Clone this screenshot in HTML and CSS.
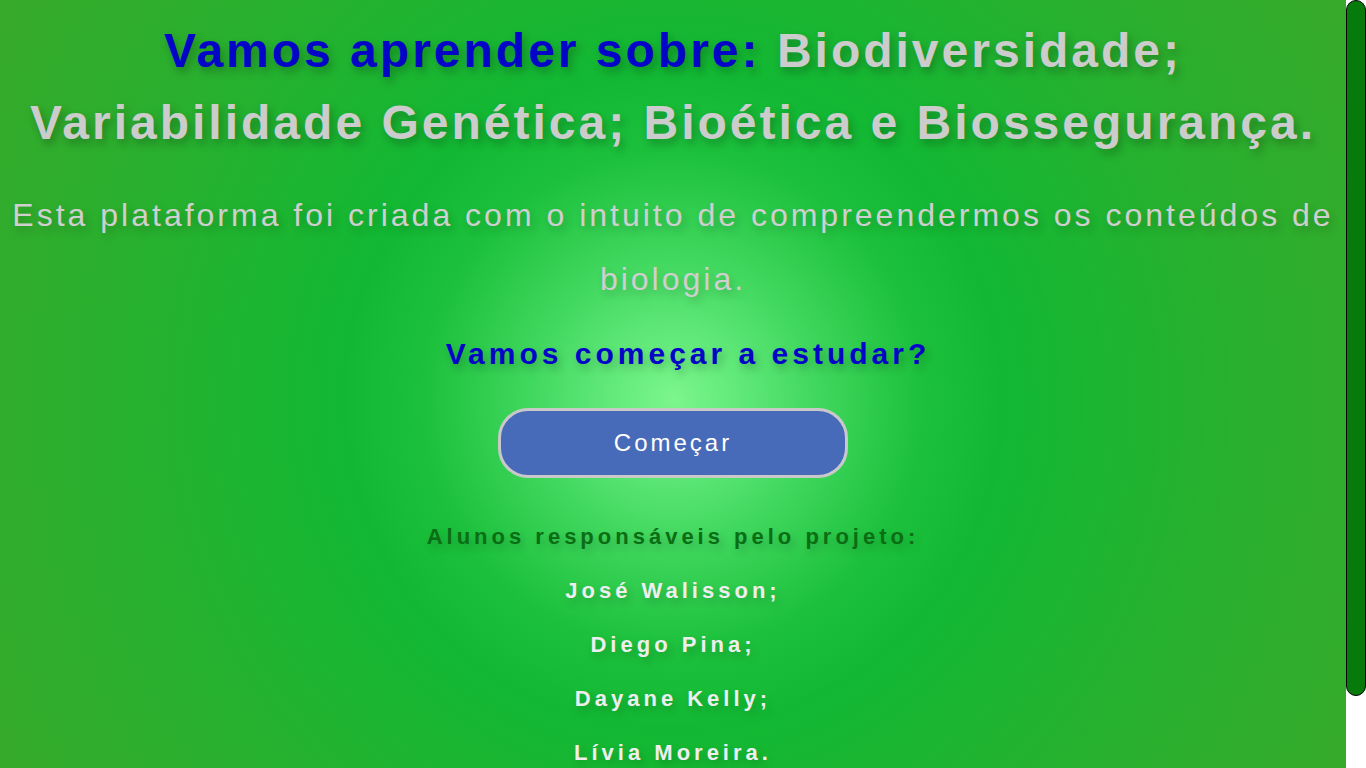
FILE: index.html
```html
<!DOCTYPE html>
<html lang="pt-BR">
<head>
<meta charset="utf-8">
<title>Biologia</title>
<link rel="stylesheet" href="styles.css">
</head>
<body>
<div class="app">
  <div class="screen">
    <main class="page">
      <h1 class="title"><span class="title-blue">Vamos aprender sobre:</span> Biodiversidade; Variabilidade Genética; Bioética e Biossegurança.</h1>
      <p class="intro">Esta plataforma foi criada com o intuito de compreendermos os conteúdos de biologia.</p>
      <h2 class="question">Vamos começar a estudar?</h2>
      <button class="start-btn" type="button">Começar</button>
      <section class="authors">
        <h3 class="authors-title">Alunos responsáveis pelo projeto:</h3>
        <p class="author">José Walisson;</p>
        <p class="author">Diego Pina;</p>
        <p class="author">Dayane Kelly;</p>
        <p class="author">Lívia Moreira.</p>
      </section>
    </main>
  </div>
  <div class="scrollbar" aria-hidden="true">
    <div class="scrollbar-thumb"></div>
  </div>
</div>
</body>
</html>
```
FILE: styles.css
```css
html, body {
  margin: 0;
  height: 100%;
  overflow: hidden;
  background: #ffffff;
}

body {
  font-family: "Liberation Sans", Arial, sans-serif;
}

.app {
  display: flex;
  height: 100vh;
}

.screen {
  flex: 1;
  min-width: 0;
  overflow-y: auto;
  scrollbar-width: none;
}

.screen::-webkit-scrollbar { display: none; }

.scrollbar {
  width: 20px;
  flex: none;
  background: #ffffff;
}

.scrollbar-thumb {
  box-sizing: border-box;
  height: 696px;
  background: #067a0b;
  border: 1px solid #000;
  border-radius: 10px;
}

.page {
  box-sizing: border-box;
  min-height: 847px;
  display: flex;
  flex-direction: column;
  align-items: center;
  text-align: center;
  padding: 15px 0 69px;
  background: radial-gradient(circle at 50% 400px,
    #7cf68c 0,
    #5fe878 70px,
    #3ed65c 150px,
    #1cc03c 250px,
    #12b833 330px,
    #28b02e 560px,
    #3aa82a 820px);
}

.title {
  margin: 0;
  font-size: 48px;
  line-height: 72px;
  font-weight: bold;
  letter-spacing: 3px;
  color: #cccccc;
  text-shadow: 3px 5px 8px rgba(0, 0, 0, 0.26);
}

.title-blue { color: #0505c8; }

.intro {
  margin: 24px 0 0;
  font-size: 32px;
  line-height: 64px;
  letter-spacing: 3px;
  color: #cfcfcf;
  text-shadow: 3px 5px 8px rgba(0, 0, 0, 0.2);
}

.question {
  margin: 23px 0 0;
  padding-left: 30px;
  font-size: 30px;
  line-height: 40px;
  font-weight: bold;
  letter-spacing: 4px;
  color: #0505c8;
  text-shadow: 3px 5px 8px rgba(0, 0, 0, 0.22);
}

.start-btn {
  margin-top: 34px;
  box-sizing: border-box;
  width: 350px;
  height: 70px;
  border: 3px solid #c9c9c9;
  border-radius: 30px;
  background: #476bb8;
  color: #ffffff;
  font-family: "Liberation Sans", Arial, sans-serif;
  font-size: 24px;
  letter-spacing: 3px;
  padding: 0;
  cursor: pointer;
}

.authors {
  margin-top: 32px;
  display: flex;
  flex-direction: column;
  align-items: center;
}

.authors-title {
  margin: 0;
  font-size: 22px;
  line-height: 54px;
  font-weight: bold;
  letter-spacing: 4px;
  color: #0b6e14;
  text-shadow: 3px 5px 8px rgba(0, 0, 0, 0.18);
}

.author {
  margin: 0;
  font-size: 22px;
  line-height: 54px;
  font-weight: bold;
  letter-spacing: 4px;
  color: #eeeeee;
  text-shadow: 3px 5px 8px rgba(0, 0, 0, 0.18);
}
```
